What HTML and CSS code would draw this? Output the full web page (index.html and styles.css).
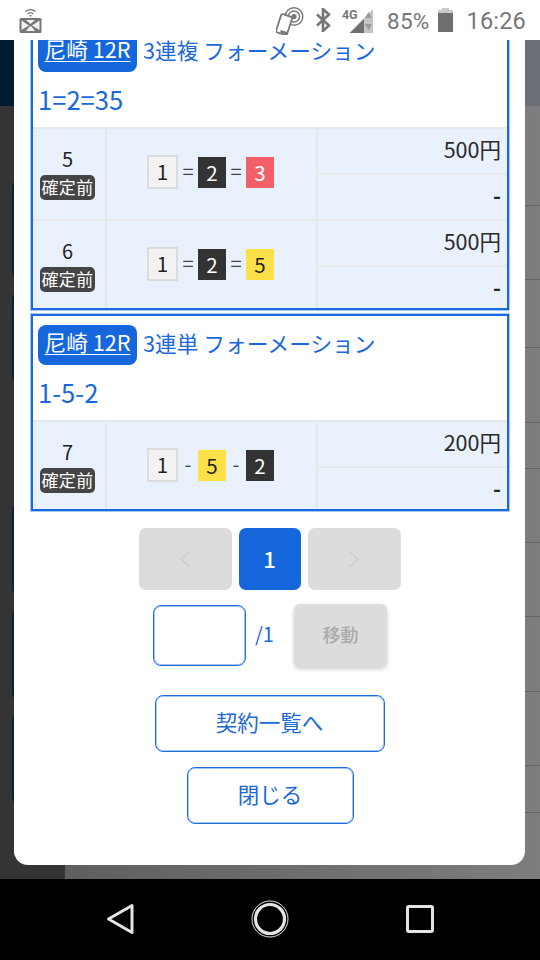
FILE: index.html
```html
<!DOCTYPE html>
<html lang="ja">
<head>
<meta charset="utf-8">
<title>契約一覧</title>
<link rel="stylesheet" href="styles.css">
</head>
<body>
<div class="screen">
  <header class="status">
    <svg class="ic-cast" viewBox="0 0 23 26"><path d="M6.500 4.500a7.500 7.500 0 0 1 10 0M8.500 7a4.500 4.500 0 0 1 6 0" fill="none" stroke="#777" stroke-width="1.300"/><rect x="10.500" y="8" width="2" height="1.500" fill="#777"/><rect x="0.500" y="11" width="22" height="15" rx="1.500" fill="#777"/><path d="M2.500 13.500 10 18.500 2.500 23ZM20.500 13.500 13 18.500 20.500 23ZM7 13 16 13 11.500 17ZM7 24 10.500 19.500 12.500 19.500 16 24Z" fill="#f2f2f2"/></svg>
    <div class="status-right">
      <svg class="ic-nfc" viewBox="0 0 28 28"><circle cx="18" cy="9.500" r="2.600" fill="#777"/><circle cx="18" cy="9.500" r="5.500" fill="none" stroke="#777" stroke-width="1.400"/><circle cx="18" cy="9.500" r="8.800" fill="none" stroke="#777" stroke-width="1.400"/><rect x="2.500" y="8" width="11.500" height="19" rx="1.500" transform="rotate(18 8 17)" fill="#fff" stroke="#777" stroke-width="1.800"/><path d="M4.500 24.200l7 2.300" stroke="#777" stroke-width="2.600"/></svg>
      <svg class="ic-bt" viewBox="0 0 15 24"><path d="M1 6.500 13 17.500 7 23V1L13 6.500 1 17.500" fill="none" stroke="#777" stroke-width="2.600"/></svg>
      <div class="signal">
        <span class="net">4G</span>
        <svg class="ic-signal" viewBox="0 0 24 24"><path d="M24 0V24H0Z" fill="#c4c4c4"/><path d="M15 10V24H1Z" fill="#6f6f6f"/><path d="M19.500 3 23 9H16ZM16 15H23L19.500 21Z" fill="#9a9a9a"/></svg>
      </div>
      <span class="pct">85%</span>
      <svg class="ic-batt" viewBox="0 0 15 24"><path d="M4 0H11V2H15V24H0V2H4Z" fill="#c9c9c9"/><rect y="5" width="15" height="19" fill="#6f6f6f"/></svg>
      <span class="clock">16:26</span>
    </div>
  </header>

  <main class="page">
    <div class="backdrop">
      <div class="bg-head"><div class="bg-head-left"></div><div class="bg-head-right"></div></div>
      <div class="bg-body">
        <aside class="bg-side">
          <div class="bg-item bg-item-a"></div>
          <div class="bg-item bg-item-b"></div>
          <div class="bg-item bg-item-b bg-far"></div>
          <div class="bg-item bg-item-b"></div>
          <div class="bg-item bg-item-b"></div>
        </aside>
        <div class="bg-rows">
          <div></div><div></div><div></div><div></div><div></div><div></div><div></div><div></div><div></div><div></div>
        </div>
      </div>
    </div>

    <section class="modal">
      <article class="card">
        <div class="card-head">
          <div class="card-title"><a class="venue">尼崎 12R</a><span class="bet-type">3連複 フォーメーション</span></div>
          <div class="card-code">1=2=35</div>
        </div>
        <table class="bets">
          <tr>
            <td class="no" rowspan="2">5<span class="tag">確定前</span></td>
            <td class="combo" rowspan="2"><div class="chips"><b class="chip c1">1</b><i>=</i><b class="chip c2">2</b><i>=</i><b class="chip c3">3</b></div></td>
            <td class="amt">500円</td>
          </tr>
          <tr><td class="amt dash">-</td></tr>
          <tr>
            <td class="no" rowspan="2">6<span class="tag">確定前</span></td>
            <td class="combo" rowspan="2"><div class="chips"><b class="chip c1">1</b><i>=</i><b class="chip c2">2</b><i>=</i><b class="chip c5">5</b></div></td>
            <td class="amt">500円</td>
          </tr>
          <tr><td class="amt dash">-</td></tr>
        </table>
      </article>

      <article class="card">
        <div class="card-head">
          <div class="card-title"><a class="venue">尼崎 12R</a><span class="bet-type">3連単 フォーメーション</span></div>
          <div class="card-code">1-5-2</div>
        </div>
        <table class="bets">
          <tr>
            <td class="no" rowspan="2">7<span class="tag">確定前</span></td>
            <td class="combo" rowspan="2"><div class="chips"><b class="chip c1">1</b><i>-</i><b class="chip c5">5</b><i>-</i><b class="chip c2">2</b></div></td>
            <td class="amt">200円</td>
          </tr>
          <tr><td class="amt dash">-</td></tr>
        </table>
      </article>

      <nav class="pager">
        <div class="pg pg-off"><svg viewBox="0 0 14 20"><path d="M12 2 3 10l9 8" fill="none" stroke="#cfcfcf" stroke-width="1.600"/></svg></div>
        <div class="pg pg-on">1</div>
        <div class="pg pg-off"><svg viewBox="0 0 14 20"><path d="M2 2l9 8-9 8" fill="none" stroke="#cfcfcf" stroke-width="1.600"/></svg></div>
      </nav>

      <div class="jump">
        <input class="jump-input" type="text" aria-label="ページ">
        <span class="jump-total">/1</span>
        <div class="jump-btn">移動</div>
      </div>

      <div class="actions">
        <div class="btn btn-list">契約一覧へ</div>
        <div class="btn btn-close">閉じる</div>
      </div>
    </section>
  </main>

  <footer class="navbar">
    <svg class="nav-back" viewBox="0 0 28 32"><path d="M26 2.500V29.500L2.500 16Z" fill="none" stroke="#e4e4e4" stroke-width="3" stroke-linejoin="round"/></svg>
    <svg class="nav-home" viewBox="0 0 38 38"><circle cx="19" cy="19" r="18" fill="none" stroke="#e4e4e4" stroke-width="1"/><circle cx="19" cy="19" r="14.500" fill="none" stroke="#e4e4e4" stroke-width="3.200"/></svg>
    <svg class="nav-recent" viewBox="0 0 28 28"><rect x="1.500" y="1.500" width="25" height="25" rx="1.500" fill="none" stroke="#e4e4e4" stroke-width="3"/></svg>
  </footer>
</div>
</body>
</html>
```

FILE: styles.css
```css
* { box-sizing: border-box; }
html, body { margin: 0; padding: 0; }
body { width: 540px; height: 960px; overflow: hidden; font-family: "Noto Sans CJK JP", "Noto Sans", sans-serif; background: #000; }

.screen { width: 540px; height: 960px; display: flex; flex-direction: column; }

/* status bar */
.status { height: 40px; flex: none; background: #fff; display: flex; justify-content: space-between; position: relative; color: #777; }
.ic-cast { width: 23px; height: 26px; margin: 7px 0 0 19px; }
.status-right { display: flex; align-items: flex-start; padding-right: 14px; }
.ic-nfc { width: 28px; height: 28px; margin-top: 7px; }
.ic-bt { width: 15px; height: 24px; margin: 8px 0 0 12px; }
.signal { width: 31px; height: 34px; margin-left: 11px; position: relative; }
.net { position: absolute; left: 0; top: 8px; font: 700 12.500px/13px "Roboto", sans-serif; color: #777; letter-spacing: -0.2px; }
.ic-signal { position: absolute; left: 7px; top: 9px; width: 24px; height: 24px; }
.pct { font: 400 22.500px/25px "Roboto", sans-serif; margin: 9px 0 0 14px; letter-spacing: 0.2px; }
.ic-batt { width: 15px; height: 24px; margin: 8px 0 0 9px; }
.clock { font: 400 23.500px/27px "Roboto", sans-serif; margin: 8px 0 0 13px; letter-spacing: 0.2px; }

/* dimmed page behind the dialog */
.page { flex: 1; position: relative; overflow: hidden; }
.backdrop { height: 100%; display: flex; flex-direction: column; }
.bg-head { height: 66px; flex: none; display: flex; }
.bg-head-left { width: 65px; background: #031a33; }
.bg-head-right { flex: 1; background: #6b6f75; }
.bg-body { flex: 1; display: flex; }
.bg-side { width: 65px; background: #343434; padding: 73px 0 0 12px; display: flex; flex-direction: column; }
.bg-item { border: 2px solid #0b2140; border-radius: 8px; margin-bottom: 11px; }
.bg-item-a { height: 101px; }
.bg-item-b { height: 94px; }
.bg-far { margin-top: 106px; }
.bg-rows { flex: 1; background: linear-gradient(90deg, #5f5f5f, #7d7d7d); display: grid; grid-template-rows: 100px 74px 68px 75px 46px 74px 74px 75px 74px 47px; }
.bg-rows div { border-bottom: 1px solid #626262; }

/* dialog */
.modal { position: absolute; left: 14px; top: 0; width: 511px; height: 825px; background: #fff; border-radius: 0 0 14px 14px; overflow: hidden; padding: 0 16px 0 17px; }
.card { width: 478px; border: 2px solid #1a69e0; box-shadow: 0 0 0 1px #a9c6f0; margin-bottom: 4px; color: #1a68dc; overflow: hidden; }
.card:first-child { margin-top: -19px; }
.card-head { height: 104px; padding: 9px 0 0 5px; background: #fff; }
.card-title { display: flex; align-items: center; gap: 6px; height: 40px; font-size: 21.700px; line-height: 36px; white-space: nowrap; }
.bet-type { padding-bottom: 4px; }
.venue { width: 99px; height: 40px; flex: none; background: #1767dc; border-radius: 8px; color: #fff; text-align: center; line-height: 34px; }
.venue { text-decoration: underline; text-underline-offset: 3px; text-decoration-thickness: 1px; }
.card-code { font-size: 25.600px; line-height: 36px; margin-top: 9px; }

.bets { width: 474px; table-layout: fixed; border-collapse: separate; border-spacing: 0; background: #e9f1fc; color: #222; margin-bottom: -3px; }
.bets tr { height: 46px; }
.bets td { padding: 0; border-top: 2px solid #e5e7eb; border-left: 2px solid #e5e7eb; }
.bets td.no { width: 72px; border-left: 0; text-align: center; font-size: 20px; line-height: 26px; vertical-align: middle; padding: 0 3px 3px 0; }
.bets td.combo { width: 211px; vertical-align: middle; }
.bets td.amt { text-align: right; font-size: 21.500px; line-height: 28px; padding: 0 6px 4px 0; color: #2a2a2a; }
.bets td.dash { font-weight: 700; }
.tag { display: block; width: 55px; height: 25px; margin: 3px auto 0; background: #454545; border-radius: 5px; color: #fff; font-size: 17px; line-height: 24px; letter-spacing: 0.3px; white-space: nowrap; }

.chips { display: flex; align-items: center; justify-content: center; padding: 0 2px 4px 0; }
.chips i { width: 20px; text-align: center; font-style: normal; font-size: 20px; color: #444; line-height: 30px; margin-top: -3px; }
.chip { width: 28px; height: 31px; font-weight: 400; font-size: 20.500px; line-height: 30px; text-align: center; }
.c1 { width: 31px; height: 34px; background: #f2f2f2; border: 2px solid #dcdcdc; color: #222; line-height: 29px; }
.c2 { background: #333; color: #fff; }
.c3 { background: #f4606a; color: #fff; }
.c5 { background: #fde047; color: #222; }

/* pager */
.pager { display: flex; justify-content: center; gap: 7px; margin-top: 17px; padding-right: 1px; }
.pg { height: 62px; border-radius: 7px; display: flex; align-items: center; justify-content: center; }
.pg svg { width: 14px; height: 20px; }
.pg-off { width: 93px; background: #dcdcdc; }
.pg-on { width: 62px; background: #1767dc; color: #fff; font-size: 22px; font-weight: 500; padding-bottom: 3px; }

.jump { display: flex; align-items: center; margin-top: 14px; padding-left: 122px; height: 63px; color: #1a68dc; }
.jump-input { width: 93px; height: 61px; border: 1px solid #1f6ddd; box-shadow: inset 0 0 0 1px rgba(31,109,221,0.4); border-radius: 8px; background: #fff; padding: 0; outline: 0; }
.jump-total { width: 48px; padding: 0 0 4px 9px; font-size: 20px; }
.jump-btn { width: 93px; height: 63px; background: #dcdcdc; border-radius: 6px; box-shadow: 0 2px 4px rgba(0,0,0,0.2); color: #aaa; font-size: 18px; font-weight: 500; text-align: center; line-height: 60px; }

.actions { display: flex; flex-direction: column; align-items: center; gap: 15px; margin-top: 28px; padding-right: 1px; }
.btn { height: 57px; border: 1px solid #1f6ddd; box-shadow: inset 0 0 0 1px rgba(31,109,221,0.4); border-radius: 8px; color: #1a68dc; font-size: 21.500px; line-height: 52px; text-align: center; background: #fff; }
.btn-list { width: 230px; }
.btn-close { width: 167px; margin-left: 1px; }

/* nav bar */
.navbar { height: 81px; flex: none; background: #000; position: relative; display: flex; align-items: center; }
.nav-back { width: 28px; height: 32px; margin: 0 0 2px 106px; }
.nav-home { width: 38px; height: 38px; margin: 0 0 2px 117px; }
.nav-recent { width: 28px; height: 28px; margin: 0 0 2px 117px; }
```
